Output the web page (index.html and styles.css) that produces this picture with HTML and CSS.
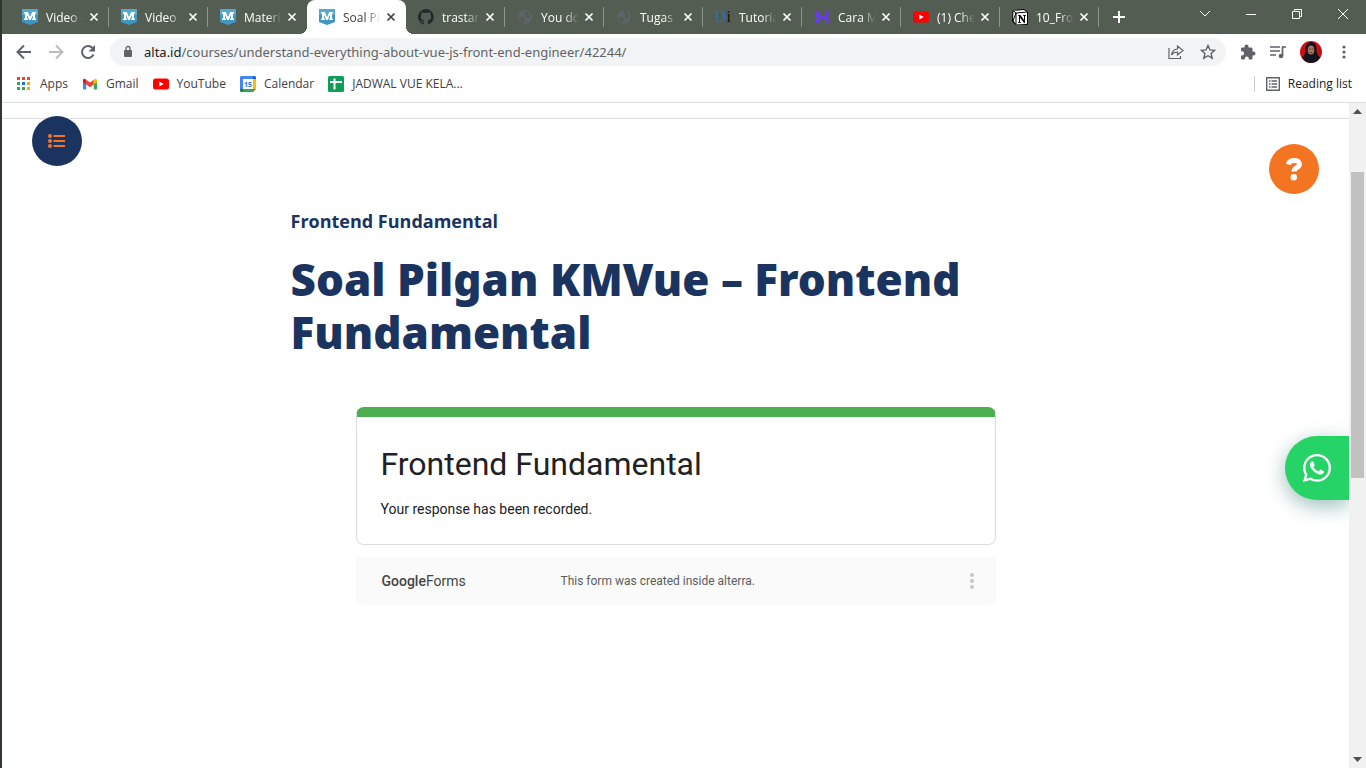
FILE: index.html
```html
<!DOCTYPE html>
<html lang="id">
<head>
<meta charset="utf-8">
<meta name="viewport" content="width=device-width, initial-scale=1">
<title>Soal Pilgan KMVue – Frontend Fundamental</title>
<link rel="stylesheet" href="styles.css">
</head>
<body>
<svg class="defs" aria-hidden="true">
  <symbol id="m" viewBox="0 0 16 16"><path d="M0 0h16v13l-8 3-8-3z" fill="#3f97c1"/><path d="M0 0h16v6H0z" fill="#55a9cf"/><path d="M2 3h3.800L8 8l2.200-5H14v1.500h-1v5h1V11h-4V9.500h1V6l-2.200 5H7.200L5 6v3.500h1V11H2V9.500h1v-5H2z" fill="#fff"/></symbol>
  <symbol id="x" viewBox="0 0 10 10"><path d="M1.500 1.500l7 7m0-7l-7 7" stroke="currentColor" stroke-width="1.700" fill="none"/></symbol>
  <symbol id="globe" viewBox="0 0 16 16"><circle cx="8" cy="8" r="7" fill="#5f6368"/><path d="M2.500 8.500c2-.5 4 0 5 1.500s-.5 2-.5 3.500C4.500 13 2.800 11 2.500 8.500zM8 2.500c-1 1-1 2-.5 2.500s2 0 2 1-1.500 1-1 2 2.500 0 4 1c1-3-1-6-4.500-6.500z" fill="#535d51"/></symbol>
  <symbol id="yt" viewBox="0 0 16 16"><rect y="2.500" width="16" height="11" rx="2.500" fill="#f00"/><path d="M6.300 5.500v5L10.700 8z" fill="#fff"/></symbol>
</svg>
<div class="window">
  <header class="chrome">
    <div class="tabstrip">
      <nav class="tabs" aria-label="Tabs">
        <div class="tab"><svg class="ic"><use href="#m"/></svg><span class="name">Video -</span><button class="close" aria-label="Close"><svg><use href="#x"/></svg></button></div>
        <div class="tab"><svg class="ic"><use href="#m"/></svg><span class="name">Video |</span><button class="close" aria-label="Close"><svg><use href="#x"/></svg></button></div>
        <div class="tab last"><svg class="ic"><use href="#m"/></svg><span class="name">Materi</span><button class="close" aria-label="Close"><svg><use href="#x"/></svg></button></div>
        <div class="tab active"><svg class="ic"><use href="#m"/></svg><span class="name">Soal Pi</span><button class="close" aria-label="Close"><svg><use href="#x"/></svg></button></div>
        <div class="tab"><svg class="ic" viewBox="0 0 16 16"><path fill="#24292e" d="M8 0a8 8 0 0 0-2.500 15.600c.4.100.5-.2.500-.4v-1.500c-2.200.5-2.700-.9-2.700-.9-.4-.9-.9-1.200-.9-1.200-.7-.5.100-.5.100-.5.800.1 1.200.8 1.200.8.700 1.200 1.900.9 2.300.7.100-.5.300-.9.500-1.100-1.800-.2-3.600-.9-3.600-4 0-.9.300-1.600.8-2.100-.1-.2-.4-1 .1-2.100 0 0 .7-.2 2.200.8a7.500 7.500 0 0 1 4 0c1.500-1 2.200-.8 2.200-.8.500 1.100.2 1.900.1 2.100.5.600.8 1.300.8 2.100 0 3.100-1.900 3.700-3.600 3.900.3.300.5.800.5 1.500v2.200c0 .200.100.5.500.4A8 8 0 0 0 8 0z"/></svg><span class="name">trastan</span><button class="close" aria-label="Close"><svg><use href="#x"/></svg></button></div>
        <div class="tab"><svg class="ic"><use href="#globe"/></svg><span class="name">You do</span><button class="close" aria-label="Close"><svg><use href="#x"/></svg></button></div>
        <div class="tab"><svg class="ic"><use href="#globe"/></svg><span class="name">Tugas</span><button class="close" aria-label="Close"><svg><use href="#x"/></svg></button></div>
        <div class="tab"><span class="ic di" aria-hidden="true"><b>D</b>i</span><span class="name">Tutoria</span><button class="close" aria-label="Close"><svg><use href="#x"/></svg></button></div>
        <div class="tab"><svg class="ic" viewBox="0 0 16 16"><path d="M1.500 1l3.500 1.800v3.400h6.500L14.500 8H1.500zM11 2.800L14.500 1v6L11 5.200zM14.500 15L11 13.200V9.800H4.500L1.500 8h13zM5 13.200L1.500 15V9L5 10.800z" fill="#673de6"/></svg><span class="name">Cara M</span><button class="close" aria-label="Close"><svg><use href="#x"/></svg></button></div>
        <div class="tab"><svg class="ic"><use href="#yt"/></svg><span class="name">(1) Che</span><button class="close" aria-label="Close"><svg><use href="#x"/></svg></button></div>
        <div class="tab"><svg class="ic" viewBox="0 0 16 16"><path d="M1 1.500L12 .5 15.500 3v12.500l-11 .5L.5 12.500z" fill="#fff" stroke="#000"/><path d="M1 1.500l3 2.500 11-1M4 4v11.500L1 12z" stroke="#000" fill="#fff"/><path d="M6 6h2.500l3.500 5V7l-1-.5V6h3v.5l-1 .5v7h-1L8 8.500v4.500l1 .5v.5H6v-.5l1-.5V7l-1-.5z" fill="#000"/></svg><span class="name">10_Fro</span><button class="close" aria-label="Close"><svg><use href="#x"/></svg></button></div>
      </nav>
      <button class="newtab" aria-label="New tab"><svg viewBox="0 0 12 12"><path d="M6 0v12M0 6h12" stroke="#fff" stroke-width="2"/></svg></button>
      <div class="winctl">
        <button aria-label="Search tabs"><svg viewBox="0 0 12 12"><path d="M1 3l5 5 5-5"/></svg></button>
        <button aria-label="Minimize"><svg viewBox="0 0 12 12"><path d="M1 6.500h10"/></svg></button>
        <button aria-label="Restore"><svg viewBox="0 0 12 12"><path d="M1.500 3.500h7v7h-7zM3.500 3V1.500h7v7H9"/></svg></button>
        <button aria-label="Close window"><svg viewBox="0 0 12 12"><path d="M1 1l10 10m0-10L1 11"/></svg></button>
      </div>
    </div>
    <div class="toolbar">
      <button aria-label="Back"><svg viewBox="0 0 16 16"><path d="M15 8H2M8 1.500L1.500 8 8 14.500" fill="none" stroke="#5f6368" stroke-width="2"/></svg></button>
      <button aria-label="Forward"><svg viewBox="0 0 16 16"><path d="M1 8h13M8 1.500L14.500 8 8 14.500" fill="none" stroke="#babcbe" stroke-width="2"/></svg></button>
      <button aria-label="Reload"><svg viewBox="0 0 16 16"><path d="M13.500 10.500A6 6 0 1 1 12.500 4" fill="none" stroke="#5f6368" stroke-width="2"/><path d="M15 1v6.500H8.500z" fill="#5f6368"/></svg></button>
      <div class="omnibox">
        <svg class="lock" viewBox="0 0 10 14"><rect x="1" y="5" width="8" height="7" rx="1" fill="#5f6368"/><path d="M3 5V3.500a2 2 0 0 1 4 0V5" fill="none" stroke="#5f6368" stroke-width="1.300"/></svg>
        <span class="url" role="textbox" aria-label="Address" tabindex="0"><b>alta.id</b>/courses/understand-everything-about-vue-js-front-end-engineer/42244/</span>
        <button aria-label="Share"><svg viewBox="0 0 16 16"><path d="M1 4v10.500h11.500V12M9.500 5V2l5.500 4.500L9.500 11V8C6.500 8 4.800 9 3.500 11 4 7.500 6 5.300 9.500 5z" fill="none" stroke="#5f6368" stroke-width="1.200"/></svg></button>
        <button aria-label="Bookmark"><svg viewBox="0 0 16 16"><path d="M8 1.500l1.900 4.400 4.800.4-3.600 3.200 1.100 4.700L8 11.700l-4.200 2.500 1.100-4.700L1.300 6.300l4.800-.4z" fill="none" stroke="#5f6368" stroke-width="1.400"/></svg></button>
      </div>
      <div class="tools">
        <button aria-label="Extensions"><svg viewBox="0 0 16 16"><path d="M13.500 7.500h-1V4.800c0-.7-.6-1.300-1.300-1.300H8.500v-1a2 2 0 0 0-4 0v1H2.300C1.600 3.500 1 4.100 1 4.800v2.500h1a2 2 0 0 1 0 4.200H1v2.700c0 .7.600 1.300 1.300 1.300h2.500v-1a2 2 0 0 1 4 0v1h2.400c.7 0 1.300-.6 1.300-1.300v-2.700h1a2 2 0 0 0 0-4z" fill="#5f6368"/></svg></button>
        <button aria-label="Media"><svg viewBox="0 0 16 16"><path d="M0 3h10M0 7h10M0 11h6M12.500 12V3H16" fill="none" stroke="#5f6368" stroke-width="1.700"/><circle cx="11" cy="12" r="2.300" fill="#5f6368"/></svg></button>
        <button class="avatar" aria-label="Profile"><svg viewBox="0 0 22 22"><circle cx="11" cy="11" r="11" fill="#c90f14"/><path d="M11 1C6.500 1 5.500 5 5.500 9c0 3-1 5-3.500 7.500A11 11 0 0 0 11 22a11 11 0 0 0 9-5.500C17.500 14 16.500 12 16.500 9c0-4-1-8-5.500-8z" fill="#12131f"/><ellipse cx="11" cy="9" rx="3.300" ry="4.600" fill="#a9765b"/><path d="M9 8h1.500M11.800 8h1.500M9.800 11.500h2.500" stroke="#4b2a22" stroke-width=".8"/></svg></button>
        <button aria-label="Menu"><svg viewBox="0 0 16 16" fill="#5f6368"><circle cx="8" cy="3" r="1.600"/><circle cx="8" cy="8" r="1.600"/><circle cx="8" cy="13" r="1.600"/></svg></button>
      </div>
    </div>
    <div class="bookmarks">
      <a href="#"><svg class="ic" viewBox="0 0 16 16"><path d="M1 1h3v3H1zM6 1h3v3H6zM11 1h3v3h-3z" fill="#ea4335"/><path d="M1 6h3v3H1zM1 11h3v3H1z" fill="#34a853"/><path d="M6 6h3v3H6z" fill="#1a73e8"/><path d="M6 11h3v3H6z" fill="#34a853"/><path d="M11 6h3v3h-3zM11 11h3v3h-3z" fill="#fbab00"/></svg>Apps</a>
      <a href="#"><svg class="ic" viewBox="0 0 16 16"><path d="M1 4v8.500c0 .500.500 1 1 1h2.200V7z" fill="#4285f4"/><path d="M15 4v8.500c0 .500-.5 1-1 1h-2.200V7z" fill="#34a853"/><path d="M4.200 8.500V3.800L8 6.600l3.800-2.800v4.700L8 11.300z" fill="#ea4335"/><path d="M1 4.500c0-1.800 1.700-2.300 3.200-.7v4.700L1 6z" fill="#c5221f"/><path d="M15 4.500c0-1.800-1.700-2.300-3.200-.7v4.700L15 6z" fill="#fbbc04"/></svg>Gmail</a>
      <a href="#"><svg class="ic"><use href="#yt"/></svg>YouTube</a>
      <a href="#"><svg class="ic" viewBox="0 0 16 16"><path d="M1 0h12v3H0V1z" fill="#4285f4"/><path d="M0 3h3v10H0z" fill="#4285f4"/><path d="M13 0h2l1 1v2h-3z" fill="#1967d2"/><path d="M13 3h3v10h-3z" fill="#fbbc04"/><path d="M3 13h10v3H3z" fill="#34a853"/><path d="M0 13h3v3H1l-1-1z" fill="#188038"/><path d="M13 13h3l-3 3z" fill="#ea4335"/><path d="M3 3h10v10H3z" fill="#fff"/><text x="8" y="11" text-anchor="middle" class="cal">15</text></svg>Calendar</a>
      <a href="#"><svg class="ic" viewBox="0 0 16 16"><rect width="16" height="16" rx="1.500" fill="#0f9d58"/><path d="M6.500 2.500v11M2 6h12" stroke="#fff" stroke-width="2"/></svg>JADWAL VUE KELA...</a>
      <button class="reading"><svg viewBox="0 0 14 14"><path d="M.7.700h12.600v12.600H.7z" fill="none" stroke="#5f6368" stroke-width="1.400"/><path d="M3 4h1.500M3 7h1.500M3 10h1.500M5.500 4H11M5.500 7H11M5.500 10H11" stroke="#5f6368" stroke-width="1.500"/></svg>Reading list</button>
    </div>
  </header>
  <div class="viewport">
    <main class="page">
      <div class="rule"></div>
      <article class="lesson">
        <p class="topic">Frontend Fundamental</p>
        <h1>Soal Pilgan KMVue – Frontend Fundamental</h1>
        <section class="form">
          <div class="card">
            <h2>Frontend Fundamental</h2>
            <p>Your response has been recorded.</p>
          </div>
          <footer class="credit">
            <span class="brand"><b>Google</b>Forms</span>
            <span class="note">This form was created inside alterra.</span>
            <button aria-label="Form options"><svg viewBox="0 0 4 16" fill="#c6c6c6"><circle cx="2" cy="2" r="2"/><circle cx="2" cy="8" r="2"/><circle cx="2" cy="14" r="2"/></svg></button>
          </footer>
        </section>
      </article>
      <button class="round list" aria-label="Course contents"><svg viewBox="0 0 18 14"><path d="M5.500 2H17M5.500 7H17M5.500 12H17" stroke="#f47521" stroke-width="2"/><g fill="#f47521"><circle cx="2" cy="2" r="2"/><circle cx="2" cy="7" r="2"/><circle cx="2" cy="12" r="2"/></g></svg></button>
      <button class="round help" aria-label="Help"><svg viewBox="0 0 16 24"><path d="M2.200 7.500C3.500 2.200 13.500 2 13.500 7.300c0 3.400-5.500 3.400-5.500 7.200" fill="none" stroke="#fff" stroke-width="5"/><circle cx="7.800" cy="20.300" r="3.200" fill="#fff"/></svg></button>
      <a class="whatsapp" href="#" aria-label="WhatsApp"><svg viewBox="0 0 448 512" fill="#fff"><path d="M380.900 97.100C339 55.100 283.200 32 223.900 32c-122.400 0-222 99.600-222 222 0 39.100 10.200 77.300 29.600 111L0 480l117.700-30.900c32.400 17.700 68.900 27 106.100 27h.1c122.300 0 224.100-99.600 224.100-222 0-59.300-25.200-115-67.100-157zm-157 341.600c-33.200 0-65.700-8.900-94-25.700l-6.700-4-69.800 18.300L72 359.200l-4.400-7c-18.500-29.400-28.200-63.300-28.200-98.200 0-101.700 82.800-184.500 184.600-184.500 49.300 0 95.600 19.200 130.400 54.100 34.800 34.900 56.200 81.200 56.100 130.500 0 101.800-84.900 184.600-186.600 184.600zm101.200-138.200c-5.500-2.800-32.800-16.200-37.900-18-5.100-1.900-8.800-2.800-12.500 2.800-3.700 5.600-14.300 18-17.600 21.800-3.200 3.700-6.500 4.200-12 1.400-32.600-16.300-54-29.100-75.500-66-5.700-9.800 5.700-9.100 16.300-30.300 1.800-3.700.9-6.900-.5-9.700-1.400-2.800-12.500-30.100-17.100-41.200-4.500-10.800-9.100-9.300-12.500-9.500-3.200-.2-6.900-.2-10.600-.2-3.700 0-9.700 1.400-14.800 6.900-5.100 5.600-19.400 19-19.400 46.300 0 27.300 19.900 53.700 22.600 57.400 2.800 3.700 39.100 59.700 94.800 83.800 35.200 15.200 49 16.500 66.600 13.900 10.700-1.600 32.800-13.400 37.400-26.400 4.600-13 4.600-24.100 3.200-26.400-1.300-2.500-5-3.900-10.500-6.600z"/></svg></a>
    </main>
    <div class="scrollbar" aria-hidden="true">
      <svg viewBox="0 0 17 17"><path d="M8.500 6L13 11H4z" fill="#505050"/></svg>
      <div class="track"><div class="thumb"></div></div>
      <svg viewBox="0 0 17 17"><path d="M8.500 11L13 6H4z" fill="#505050"/></svg>
    </div>
  </div>
</div>
</body>
</html>
```

FILE: styles.css
```css
* { box-sizing: border-box; }
body { margin: 0; background: #2f3634; font-family: "Open Sans", "Noto Sans", sans-serif; }
button { border: 0; padding: 0; background: none; font: inherit; color: inherit; display: flex; align-items: center; justify-content: center; }
a { color: inherit; text-decoration: none; }
svg { display: block; }
h1, h2, p { margin: 0; }
.defs { display: none; }
.window { margin-left: 2px; height: 100vh; display: flex; flex-direction: column; background: #fff; }
.ic { width: 16px; height: 16px; flex: none; }

.tabstrip { display: flex; height: 34px; background: #535d51; color: #fff; font-size: 12px; }
.tabs { display: flex; flex: 0 1 1097px; min-width: 0; padding-left: 8px; }
.tab { flex: 1 1 0; min-width: 0; display: flex; align-items: center; padding: 0 9px 0 12px; position: relative; }
.tab::after { content: ""; position: absolute; right: 0; top: 7px; width: 1px; height: 20px; background: #8d948c; }
.tab.last::after, .tab.active::after { display: none; }
.name { flex: 1 1 0; min-width: 0; margin-left: 8px; overflow: hidden; white-space: nowrap; mask-image: linear-gradient(to right, #000 55%, transparent 90%); }
.close { width: 12px; height: 12px; flex: none; }
.close svg { width: 10px; height: 10px; }
.active { background: #fff; color: #3c4043; border-radius: 8px 8px 0 0; }
.active::before { content: ""; position: absolute; left: -8px; right: -8px; bottom: 0; height: 8px; background: radial-gradient(circle at 0 0, transparent 8px, #fff 8px) left / 8px 8px no-repeat, radial-gradient(circle at 100% 0, transparent 8px, #fff 8px) right / 8px 8px no-repeat; }
.di { font: 16px/16px "Liberation Serif", serif; color: #111; text-align: center; }
.di b { color: #1f70c1; font-weight: 400; }
.newtab { width: 40px; }
.newtab svg { width: 12px; height: 12px; }
.winctl { display: flex; margin-left: auto; }
.winctl button { width: 46px; height: 28px; }
.winctl svg { width: 12px; height: 12px; fill: none; stroke: #fff; }

.toolbar { display: flex; align-items: center; height: 36px; padding: 0 14px; gap: 16px; }
.toolbar svg { width: 16px; height: 16px; }
.omnibox { flex: 1; min-width: 0; height: 28px; display: flex; align-items: center; gap: 16px; margin: 0 -2px; padding: 0 10px 0 13px; background: #f1f3f4; border-radius: 14px; }
.toolbar .lock { width: 10px; height: 14px; }
.url { flex: 1; min-width: 0; margin-left: -5px; overflow: hidden; white-space: nowrap; font-family: "Noto Sans", sans-serif; font-size: 13px; color: #5f6368; }
.url b { font-weight: 400; color: #202124; }
.tools { display: flex; align-items: center; gap: 14px; }
.toolbar .avatar svg { width: 22px; height: 22px; }

.bookmarks { display: flex; align-items: center; height: 33px; padding: 0 14px 5px; gap: 14px; border-bottom: 1px solid #dadce0; font-size: 12px; color: #3c4043; }
.bookmarks a { display: flex; align-items: center; gap: 8px; white-space: nowrap; }
.cal { font: 700 7px "Open Sans", sans-serif; fill: #1a73e8; }
.reading { margin-left: auto; height: 16px; gap: 8px; padding-left: 11px; border-left: 1px solid #c8cacd; color: #202124; }
.reading svg { width: 14px; height: 14px; }

.viewport { flex: 1; min-height: 0; display: flex; }
.page { flex: 1; min-width: 0; position: relative; overflow: hidden; }
.rule { height: 16px; border-bottom: 1px solid #dcdcdc; }
.lesson { max-width: 770px; margin: 0 auto; padding-top: 90px; color: #1a345f; }
.topic { font-size: 18px; line-height: 24px; font-weight: 700; }
h1 { margin-top: 20px; font: 900 44px/53px "Noto Sans", "Open Sans", sans-serif; }
.form { max-width: 640px; margin: 48px auto 0; font-family: Roboto, sans-serif; color: #202124; }
.card { border: 1px solid #dadce0; border-top: 10px solid #4caf50; border-radius: 8px; padding: 27px 24px 24px; }
.card h2 { font-size: 32px; line-height: 40px; font-weight: 400; }
.card p { margin-top: 15px; font-size: 14px; line-height: 21px; }
.credit { display: grid; grid-template-columns: 179px 1fr 4px; align-items: center; margin-top: 12px; height: 48px; padding: 0 22px 0 26px; border-radius: 0 0 8px 8px; background: #fafafa; font-size: 12px; color: #5c5c5c; }
.brand { font-size: 14px; color: #444; }
.brand b { font-weight: 500; }
.credit svg { width: 4px; height: 16px; }

.round { position: absolute; width: 50px; height: 50px; border-radius: 50%; }
.list { left: 30px; top: 13px; background: #1a345f; }
.list svg { width: 18px; height: 14px; }
.help { right: 30px; top: 41px; background: #f47521; }
.help svg { width: 16px; height: 24px; }
.whatsapp { position: absolute; right: 0; top: 50%; width: 64px; height: 64px; display: flex; align-items: center; justify-content: center; border-radius: 32px 0 0 32px; background: #25d366; box-shadow: 0 6px 20px rgba(7, 94, 84, .4); }
.whatsapp svg { width: 28px; height: 32px; }

.scrollbar { width: 17px; display: flex; flex-direction: column; background: #f1f1f1; }
.scrollbar svg { width: 17px; height: 17px; }
.track { flex: 1; display: flex; flex-direction: column; padding: 52px 2px 0; }
.thumb { flex: 0 0 53%; min-height: 0; max-height: 306px; background: #c1c1c1; }
```
